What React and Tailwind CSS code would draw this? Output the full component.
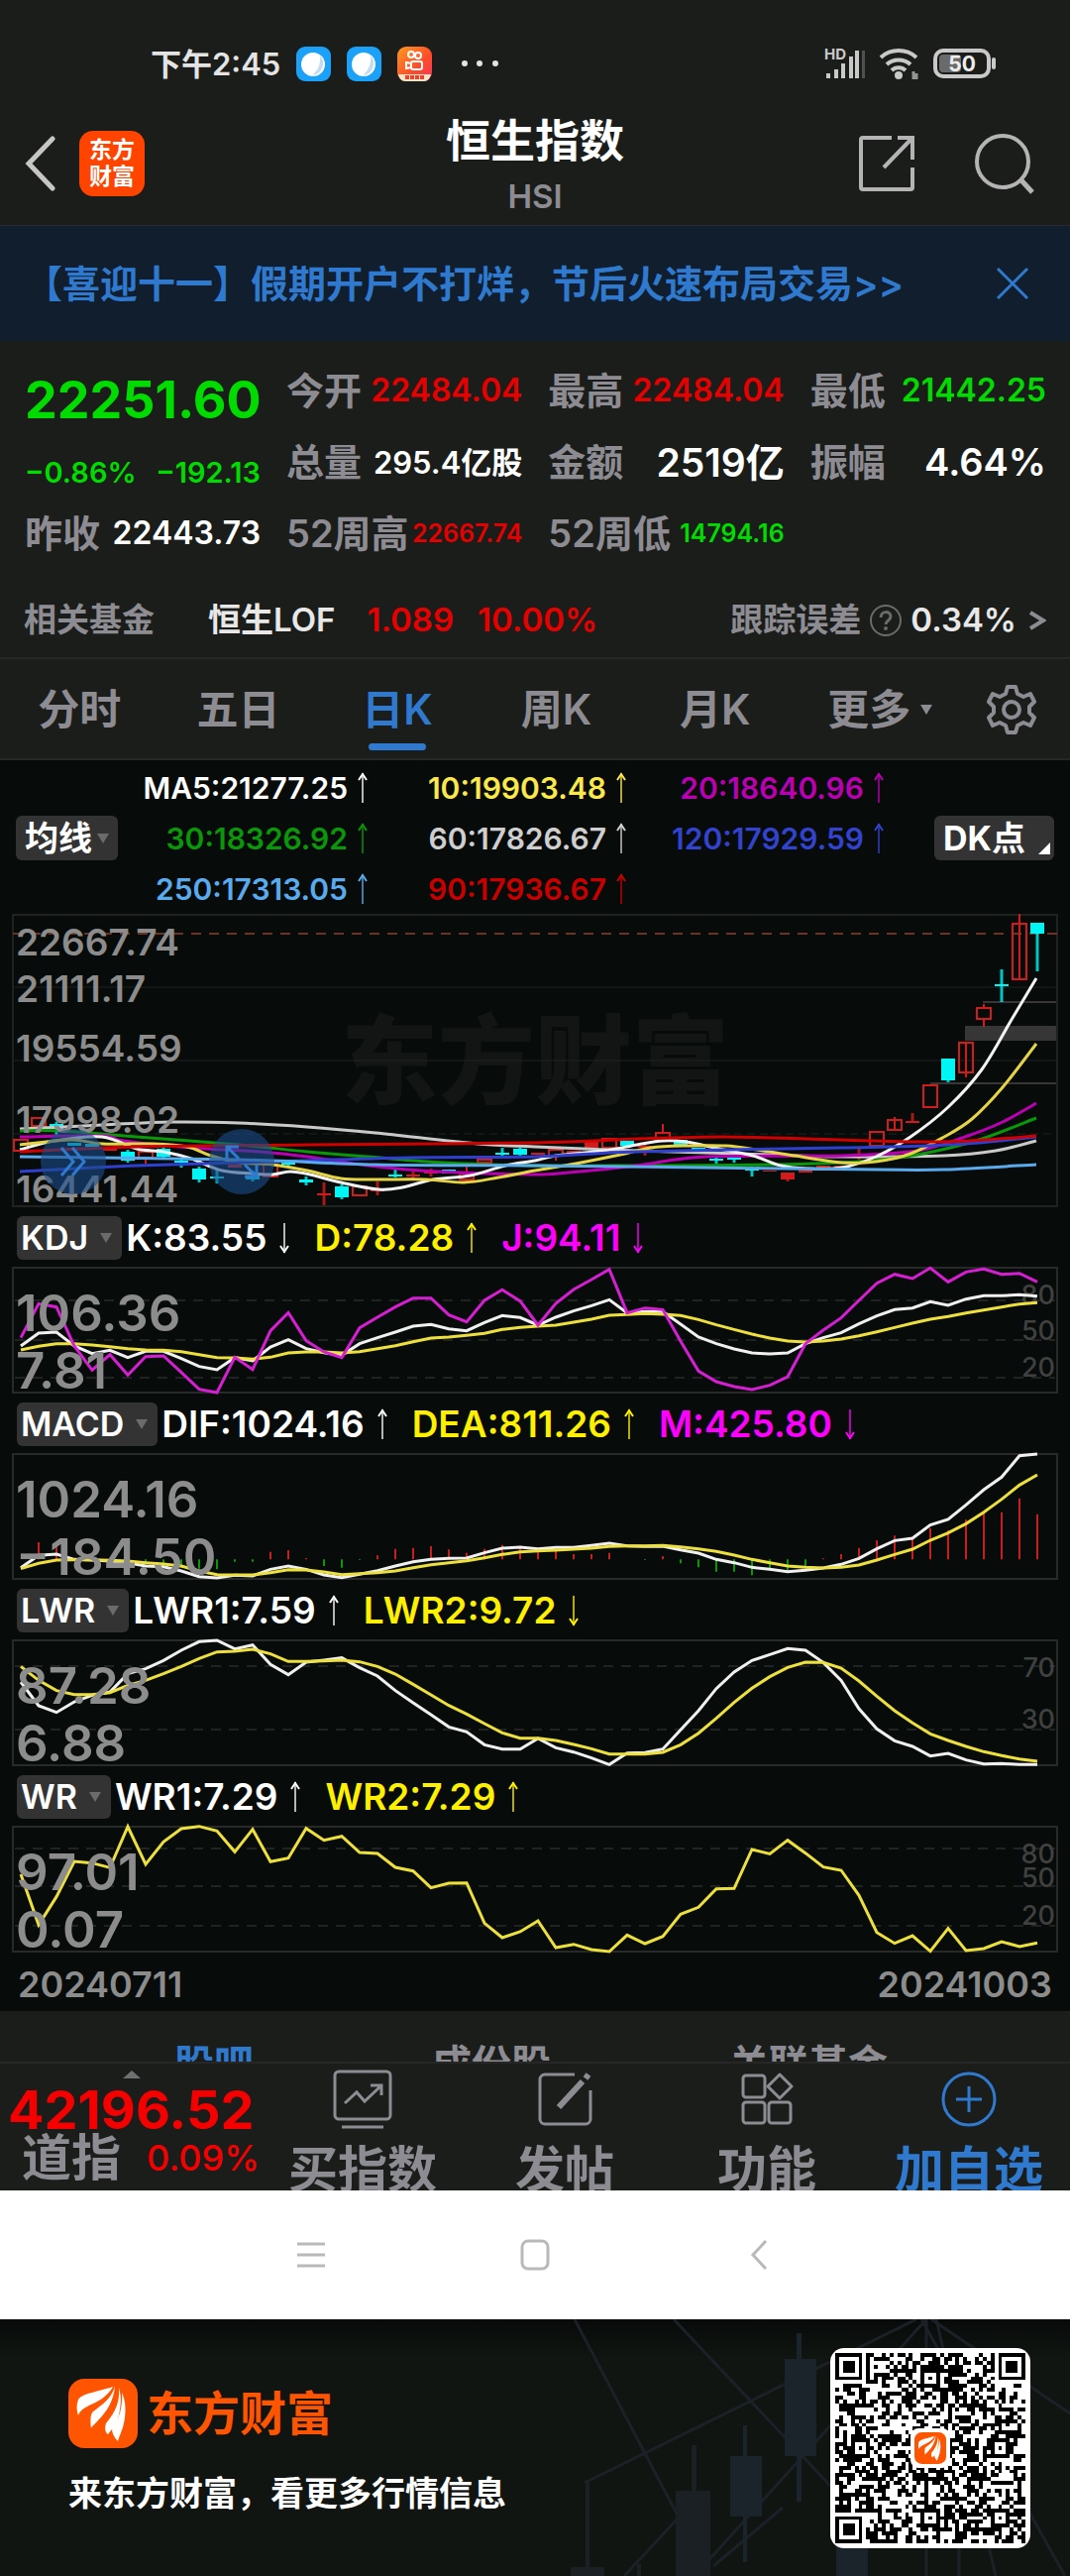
import { useState } from "react";

const STEP = 18;
const FIRST_X = 21;

const quoteRows = [
  { label: "今开", value: "22484.04", tone: "text-[#e60000] text-[32px]" },
  { label: "最高", value: "22484.04", tone: "text-[#e60000] text-[32px]" },
  { label: "最低", value: "21442.25", tone: "text-[#00dc00] text-[32px]" },
  { label: "总量", value: "295.4亿股", tone: "text-white text-[31px]" },
  { label: "金额", value: "2519亿", tone: "text-white text-[39px]" },
  { label: "振幅", value: "4.64%", tone: "text-white text-[38px]" },
  { label: "52周高", value: "22667.74", tone: "text-[#e60000] text-[25px]" },
  { label: "52周低", value: "14794.16", tone: "text-[#00dc00] text-[25px]" },
];

const periods = ["分时", "五日", "日K", "周K", "月K"];

const averages = [
  { text: "MA5:21277.25", color: "text-white" },
  { text: "10:19903.48", color: "text-[#fbe94b]" },
  { text: "20:18640.96", color: "text-[#bb00b4]" },
  { text: "30:18326.92", color: "text-[#0a970a]" },
  { text: "60:17826.67", color: "text-[#cfcfcf]" },
  { text: "120:17929.59", color: "text-[#3243cf]" },
  { text: "250:17313.05", color: "text-[#5aabee]" },
  { text: "90:17936.67", color: "text-[#c80000]" },
];

// [index, kind, body top, body bottom, wick top, wick bottom]
// kind: r = hollow red, f = filled red, c = cyan
const candles = [
  [0, "r", 228, 239], [1, "r", 206, 214], [2, "c", 212, 217, 210, 223],
  [3, "c", 231, 234], [4, "c", 232, 235], [5, "f", 236, 239],
  [6, "c", 240, 249, 238, 251], [7, "r", 240, 246, 239, 252], [8, "c", 237, 245, 235, 247],
  [9, "c", 249, 251, 246, 256], [10, "c", 257, 268, 255, 271], [11, "c", 265, 267, 258, 272],
  [12, "f", 253, 256], [13, "c", 264, 268, 259, 270], [14, "r", 253, 265],
  [15, "c", 251, 253, 249, 255], [16, "c", 268, 271, 265, 274], [17, "f", 282, 284, 271, 294],
  [18, "c", 275, 286, 273, 288], [19, "r", 275, 284], [20, "f", 278, 280, 270, 284],
  [21, "c", 263, 265, 257, 266], [22, "f", 263, 265, 260, 267], [23, "f", 260, 262, 257, 265],
  [24, "c", 258, 262], [25, "r", 262, 268, 255, 271], [26, "r", 248, 251],
  [27, "c", 241, 243, 236, 244], [28, "c", 237, 243, 236, 245], [29, "f", 241, 243],
  [30, "r", 238, 244, 238, 249], [31, "f", 239, 241], [32, "f", 230, 236],
  [33, "r", 227, 236], [34, "c", 229, 234], [35, "f", 234, 236, 232, 244],
  [36, "r", 221, 228, 212, 228], [37, "c", 228, 234], [38, "c", 236, 240],
  [39, "c", 247, 249, 244, 252], [40, "c", 246, 248, 245, 251], [41, "c", 257, 259, 255, 265],
  [42, "f", 259, 260], [43, "f", 261, 268, 261, 270], [44, "f", 259, 261],
  [45, "f", 254, 256], [46, "f", 254, 256, 254, 259], [47, "f", 242, 246, 236, 248],
  [48, "r", 220, 234], [49, "r", 208, 218, 205, 208], [50, "f", 209, 211, 201, 211],
  [51, "r", 173, 195], [52, "c", 146, 168, 146, 170], [53, "r", 130, 160, 160, 165],
  [54, "r", 95, 106, 91, 114], [55, "c", 71, 73, 56, 89], [56, "r", 10, 66, 0, 10],
  [57, "c", 9, 20, 9, 58],
];

const maLines = [
  { color: "#c9c9c9", pts: [[20, 217], [103, 213], [172, 210], [241, 211], [310, 215], [379, 221], [482, 232], [540, 235], [643, 239], [747, 242], [850, 245], [953, 244], [1005, 239], [1046, 229]] },
  { color: "#0a970a", pts: [[20, 219], [62, 219], [138, 225], [241, 233], [310, 240], [372, 245], [448, 251], [540, 254], [643, 254], [781, 253], [867, 250], [926, 243], [988, 228], [1046, 206]] },
  { color: "#bb00b4", pts: [[20, 225], [103, 224], [125, 229], [193, 236], [262, 240], [310, 245], [372, 254], [441, 260], [537, 263], [574, 261], [643, 254], [712, 245], [850, 244], [926, 239], [974, 225], [1012, 210], [1046, 191]] },
  { color: "#f3f3f3", pts: [[20, 238], [55, 229], [103, 225], [138, 237], [165, 240], [193, 247], [224, 259], [255, 262], [275, 263], [293, 260], [313, 263], [344, 271], [382, 278], [406, 276], [437, 268], [475, 264], [510, 254], [540, 249], [561, 244], [609, 239], [643, 233], [669, 229], [692, 230], [726, 237], [760, 244], [788, 254], [815, 257], [850, 256], [884, 245], [919, 225], [957, 195], [991, 157], [1022, 105], [1046, 65]] },
  { color: "#e5d444", pts: [[20, 233], [72, 228], [103, 232], [155, 232], [189, 235], [213, 244], [241, 251], [275, 253], [310, 259], [344, 267], [379, 268], [430, 268], [468, 271], [503, 266], [540, 259], [581, 252], [626, 243], [657, 236], [692, 234], [733, 234], [764, 238], [802, 244], [850, 251], [884, 250], [919, 242], [953, 225], [981, 207], [1012, 175], [1046, 131]] },
  { color: "#2f3fd0", pts: [[20, 260], [138, 254], [275, 250], [413, 246], [540, 245], [643, 240], [850, 236], [936, 234], [988, 231], [1046, 225]] },
  { color: "#5aabee", pts: [[20, 245], [241, 248], [379, 253], [540, 254], [712, 256], [884, 258], [953, 258], [1046, 253]] },
  { color: "#d00000", pts: [[20, 240], [138, 235], [310, 233], [540, 231], [643, 227], [729, 225], [815, 227], [953, 230], [1046, 224]] },
];

// Series are stored at three units per chart pixel, measured down from `base`.
const indicators = [
  {
    name: "KDJ",
    base: 175,
    legend: [
      { text: "K:83.55", dir: "down", color: "text-white" },
      { text: "D:78.28", dir: "up", color: "text-[#fff000]" },
      { text: "J:94.11", dir: "down", color: "text-[#ff00ff]" },
    ],
    max: "106.36",
    min: "7.81",
    grid: [33, 73, 111],
    marks: [["80", 37], ["50", 73], ["20", 110]],
    series: [
      { color: "#f0f0f0", values: [412, 373, 370, 412, 435, 425, 447, 428, 428, 450, 474, 484, 447, 457, 415, 393, 420, 432, 440, 405, 387, 370, 352, 347, 360, 366, 341, 320, 326, 349, 325, 306, 290, 272, 312, 308, 308, 346, 385, 405, 421, 433, 436, 433, 405, 387, 372, 345, 321, 302, 297, 278, 289, 270, 260, 260, 257, 261] },
      { color: "#eee03c", values: [424, 413, 405, 405, 409, 414, 420, 424, 425, 429, 438, 447, 448, 452, 446, 433, 430, 430, 433, 429, 420, 411, 399, 388, 385, 380, 374, 362, 356, 352, 349, 340, 331, 319, 317, 314, 316, 320, 332, 348, 362, 376, 388, 397, 400, 397, 391, 381, 369, 356, 343, 331, 323, 312, 303, 294, 285, 281] },
      { color: "#d61ed2", values: [387, 284, 294, 412, 485, 438, 500, 444, 442, 492, 543, 553, 446, 483, 366, 311, 396, 430, 447, 357, 325, 294, 267, 267, 318, 339, 274, 242, 276, 349, 283, 241, 211, 180, 312, 297, 302, 398, 488, 520, 535, 544, 531, 505, 405, 364, 327, 274, 222, 195, 208, 176, 218, 188, 179, 195, 192, 218] },
    ],
  },
  {
    name: "MACD",
    base: 171,
    legend: [
      { text: "DIF:1024.16", dir: "up", color: "text-white" },
      { text: "DEA:811.26", dir: "up", color: "text-[#fff000]" },
      { text: "M:425.80", dir: "down", color: "text-[#ff00ff]" },
    ],
    max: "1024.16",
    min: "−184.50",
    grid: [],
    marks: [],
    zero: 490,
    bars: [490, 438, 450, 490, 490, 490, 490, 505, 510, 515, 518, 520, 497, 497, 467, 462, 486, 510, 515, 492, 478, 458, 455, 450, 460, 470, 458, 446, 455, 463, 465, 474, 474, 470, 490, 492, 480, 502, 514, 527, 527, 538, 525, 528, 512, 487, 474, 455, 432, 418, 426, 395, 402, 370, 350, 347, 305, 353],
    series: [
      { color: "#f0f0f0", values: [515, 478, 474, 490, 492, 495, 500, 510, 512, 525, 542, 546, 538, 540, 520, 510, 520, 537, 545, 535, 524, 510, 497, 490, 487, 486, 470, 456, 453, 458, 454, 454, 448, 441, 449, 451, 450, 461, 471, 490, 500, 514, 520, 527, 523, 516, 505, 487, 458, 433, 426, 386, 369, 325, 279, 241, 176, 171] },
      { color: "#eee03c", values: [518, 502, 492, 491, 491, 493, 495, 500, 504, 510, 525, 536, 537, 537, 530, 521, 522, 528, 536, 533, 530, 525, 515, 506, 500, 494, 485, 475, 467, 464, 462, 459, 456, 451, 449, 449, 448, 452, 458, 466, 477, 490, 500, 510, 514, 516, 514, 507, 492, 475, 459, 432, 410, 382, 347, 308, 265, 234] },
    ],
  },
  {
    name: "LWR",
    base: 164,
    legend: [
      { text: "LWR1:7.59", dir: "up", color: "text-white" },
      { text: "LWR2:9.72", dir: "down", color: "text-[#fff000]" },
    ],
    max: "87.28",
    min: "6.88",
    grid: [26, 90],
    marks: [["70", 37], ["30", 89]],
    series: [
      { color: "#f0f0f0", values: [290, 362, 382, 350, 330, 320, 265, 250, 225, 194, 168, 164, 190, 178, 237, 268, 230, 224, 217, 247, 272, 316, 353, 389, 426, 441, 480, 493, 493, 461, 489, 502, 520, 540, 505, 504, 493, 435, 377, 310, 260, 225, 207, 189, 194, 231, 285, 371, 432, 468, 485, 514, 506, 526, 538, 537, 540, 540] },
      { color: "#eee03c", values: [243, 285, 316, 328, 328, 322, 300, 285, 265, 243, 219, 199, 197, 191, 205, 228, 228, 226, 224, 229, 243, 266, 297, 329, 361, 387, 416, 444, 460, 460, 467, 479, 492, 508, 508, 508, 503, 480, 445, 400, 352, 309, 274, 246, 230, 231, 248, 287, 333, 377, 414, 447, 467, 485, 501, 513, 523, 530] },
    ],
  },
  {
    name: "WR",
    base: 158,
    legend: [
      { text: "WR1:7.29", dir: "up", color: "text-white" },
      { text: "WR2:7.29", dir: "up", color: "text-[#fff000]" },
    ],
    max: "97.01",
    min: "0.07",
    grid: [22, 60, 100],
    marks: [["80", 37], ["50", 61], ["20", 99]],
    series: [
      { color: "#eee03c", values: [302, 455, 370, 263, 268, 282, 158, 272, 204, 164, 157, 171, 234, 166, 264, 253, 163, 199, 187, 236, 239, 281, 292, 343, 329, 328, 450, 494, 476, 443, 524, 514, 530, 536, 486, 512, 490, 423, 402, 346, 345, 227, 240, 199, 238, 280, 290, 366, 478, 511, 488, 535, 466, 533, 527, 506, 521, 510] },
    ],
  },
];

// Catmull-Rom spline through every point
const smooth = (pts) =>
  pts.reduce((d, p, i) => {
    if (i === 0) return `M${p[0]} ${p[1]}`;
    const a = pts[i - 2] || pts[i - 1];
    const b = pts[i - 1];
    const c = pts[i + 1] || p;
    return `${d}C${b[0] + (p[0] - a[0]) / 6} ${b[1] + (p[1] - a[1]) / 6} ${
      p[0] - (c[0] - b[0]) / 6
    } ${p[1] - (c[1] - b[1]) / 6} ${p[0]} ${p[1]}`;
  }, "");

const Arrow = ({ dir = "up" }) => (
  <svg
    viewBox="0 0 12 32"
    className={dir === "up" ? "h-8 w-3 shrink-0" : "h-8 w-3 shrink-0 rotate-180"}
    fill="none"
    stroke="currentColor"
  >
    <path d="M6 1v30" strokeWidth="2" opacity="0.7" />
    <path d="M2 8l4-6 4 6" strokeWidth="2" />
  </svg>
);

const Caret = ({ className }) => (
  <svg viewBox="0 0 12 10" className={className} fill="currentColor">
    <path d="M0 0h12L6 10z" />
  </svg>
);

const AppBubble = () => (
  <svg viewBox="0 0 35 35" className="size-[35px]">
    <rect width="35" height="35" rx="9" fill="#1ba1f7" />
    <ellipse cx="17" cy="18" rx="12" ry="12" fill="#fff" />
    <path d="M24 9a12 12 0 0 1-8 20c5-4 9-10 8-20z" fill="#c4dcf2" />
  </svg>
);

const StatusBar = () => (
  <div className="flex h-[102px] items-center justify-between pt-[26px] pr-[74px] pl-[152px]">
    <div className="flex items-center gap-4">
      <span className="text-[31px] font-semibold text-[#e4e4e4]">下午2:45</span>
      <AppBubble />
      <AppBubble />
      <svg viewBox="0 0 35 35" className="size-[35px]">
        <defs>
          <linearGradient id="clip" x1="0" y1="0" x2="1" y2="1">
            <stop offset="0" stopColor="#ff9a1f" />
            <stop offset="0.6" stopColor="#ff4a2a" />
            <stop offset="1" stopColor="#f5365c" />
          </linearGradient>
        </defs>
        <rect width="35" height="35" rx="9" fill="url(#clip)" />
        <g fill="none" stroke="#fff" strokeWidth="2">
          <circle cx="14" cy="8" r="3" />
          <circle cx="21" cy="9" r="3" />
          <rect x="14" y="15" width="11" height="8" rx="2" />
          <path d="M14 17l-5-1v6l5-1" />
        </g>
        <path d="M1 28h33c-1 4-3 7-7 7H8c-4 0-6-3-7-7z" fill="#fbe3c8" />
        <path d="M8 31h19" stroke="#e8452c" strokeWidth="4" strokeDasharray="4 1" />
      </svg>
      <svg viewBox="0 0 48 8" className="ml-3 h-2 w-12" fill="#e4e4e4">
        <circle cx="5" cy="4" r="3" />
        <circle cx="20" cy="4" r="3" />
        <circle cx="36" cy="4" r="3" />
      </svg>
    </div>
    <div className="flex items-center gap-3 text-[#c9c9c9]">
      <svg viewBox="0 0 42 34" className="h-[34px] w-[42px] overflow-visible" fill="currentColor">
        <text x="0" y="13" fontSize="15" fontWeight="700">HD</text>
        <path d="M2 27h4v5H2zM10 23h4v9h-4zM17 17h4v15h-4zM25 10h4v22h-4z" />
        <path d="M31 4h4v28h-4z" />
        <path d="M38 4h3v28h-3z" opacity="0.3" />
      </svg>
      <svg viewBox="0 0 44 36" className="h-9 w-11" fill="none" stroke="currentColor" strokeWidth="4">
        <path d="M3 12a27 27 0 0 1 36 0M9 19a18 18 0 0 1 24 0M14 25a10 10 0 0 1 14 0" />
        <circle cx="21" cy="30" r="2" fill="currentColor" />
        <path d="M36 26v8M39 28v6" strokeWidth="3" opacity="0.7" />
      </svg>
      <svg viewBox="0 0 64 30" className="h-[30px] w-16">
        <rect x="2" y="2" width="54" height="26" rx="8" fill="none" stroke="currentColor" strokeWidth="4" />
        <rect x="6" y="6" width="22" height="18" rx="4" fill="#6a6a6a" />
        <path d="M61 11v8" stroke="currentColor" strokeWidth="4" strokeLinecap="round" />
        <text x="29" y="23" fontSize="21" fontWeight="700" fill="#eee" textAnchor="middle">50</text>
      </svg>
    </div>
  </div>
);

const Header = () => (
  <header className="grid h-[126px] grid-cols-[1fr_auto_1fr] items-center border-b border-[#262a2e] px-6">
    <div className="flex items-center gap-6">
      <button aria-label="返回" className="text-[#c6c6c6]">
        <svg viewBox="0 0 32 56" className="h-14 w-8" fill="none" stroke="currentColor" strokeWidth="5">
          <path d="M29 3L5 28l24 25" strokeLinecap="round" />
        </svg>
      </button>
      <a
        href="#home"
        className="flex size-[66px] flex-col items-center justify-center rounded-[14px] bg-[#ff4400] text-[23px] leading-[27px] font-bold text-white"
      >
        <span>东方</span>
        <span>财富</span>
      </a>
    </div>
    <div className="flex flex-col items-center pt-[6px]">
      <h1 className="text-[45px] leading-[60px] font-bold text-white">恒生指数</h1>
      <span className="text-[33px] leading-[50px] font-semibold text-[#8d8c92]">HSI</span>
    </div>
    <div className="flex items-center justify-end gap-[58px] pr-[10px] text-[#b4b4b4]">
      <button aria-label="分享">
        <svg viewBox="0 0 58 58" className="size-[58px]" fill="none" stroke="currentColor" strokeWidth="4">
          <path d="M34 3H5a2 2 0 0 0-2 2v48a2 2 0 0 0 2 2h48a2 2 0 0 0 2-2V33" />
          <path d="M40 3h15v22M55 3L26 33" />
        </svg>
      </button>
      <button aria-label="搜索">
        <svg viewBox="0 0 64 64" className="size-16" fill="none" stroke="currentColor" strokeWidth="4">
          <circle cx="30" cy="30" r="26" />
          <path d="M48 48l12 13" strokeWidth="5" />
        </svg>
      </button>
    </div>
  </header>
);

const Quote = () => (
  <section className="grid grid-cols-[238px_1fr] gap-x-[26px] pt-[14px] pr-6 pb-3 pl-[25px] font-semibold">
    <div className="flex flex-col">
      <strong className="flex h-[92px] items-center text-[52px] font-bold text-[#00dc00]">22251.60</strong>
      <div className="flex h-[52px] items-center justify-between text-[29px] text-[#00dc00]">
        <span>−0.86%</span>
        <span>−192.13</span>
      </div>
      <div className="flex h-[72px] items-center justify-between">
        <span className="text-[38px] text-[#8d8c92]">昨收</span>
        <span className="text-[32px] text-white">22443.73</span>
      </div>
    </div>
    <dl className="grid grid-cols-3 gap-x-[26px]">
      {quoteRows.map((row) => (
        <div key={row.label} className="flex h-[72px] items-center justify-between whitespace-nowrap">
          <dt className="text-[38px] text-[#8d8c92]">{row.label}</dt>
          <dd className={row.tone}>{row.value}</dd>
        </div>
      ))}
    </dl>
  </section>
);

const RelatedFund = () => (
  <a
    href="#fund"
    className="flex h-[79px] items-center border-b-2 border-[#262726] px-6 pt-[2px] text-[33px] font-semibold whitespace-nowrap text-[#e8e8e8]"
  >
    <span className="text-[#8d8c92]">相关基金</span>
    <span className="ml-[54px]">恒生LOF</span>
    <span className="ml-8 text-[#e60000]">1.089</span>
    <span className="ml-6 text-[#e60000]">10.00%</span>
    <span className="ml-auto text-[#8d8c92]">跟踪误差</span>
    <svg viewBox="0 0 34 34" className="mx-2 size-[34px]" fill="none" stroke="#6b6b6b" strokeWidth="2">
      <circle cx="17" cy="17" r="15" />
      <path d="M12 14c0-7 10-7 10-1 0 4-5 4-5 8" strokeWidth="3" />
      <circle cx="17" cy="25" r="1" fill="#6b6b6b" />
    </svg>
    <span>0.34%</span>
    <svg viewBox="0 0 18 22" className="ml-3 h-[22px] w-[18px]" fill="none" stroke="#8d8c92" strokeWidth="4">
      <path d="M2 3l13 8-13 8" />
    </svg>
  </a>
);

const PeriodTabs = ({ active, onChange }) => (
  <nav className="grid h-[102px] grid-cols-[repeat(6,161fr)_118fr] items-stretch border-b-2 border-[#262726] pt-[2px] text-[42px] font-semibold text-[#8d8c92]">
    {periods.map((p) => (
      <button
        key={p}
        onClick={() => onChange(p)}
        className={p === active ? "relative text-[#2f7ace]" : "relative"}
      >
        {p}
        {p === active && (
          <span className="absolute bottom-2 left-1/2 h-[7px] w-[58px] -translate-x-1/2 rounded-full bg-[#2f7ace]" />
        )}
      </button>
    ))}
    <button className="flex items-center justify-center gap-[10px] pl-3">
      更多
      <Caret className="h-[10px] w-3" />
    </button>
    <button aria-label="设置" className="flex items-center justify-center">
      <svg viewBox="0 0 50 52" className="h-[52px] w-[50px]" fill="none" stroke="currentColor" strokeWidth="4" strokeLinejoin="round">
        <path d="M21 3h8l2 7 6 3 7-3 4 8-5 5v6l5 5-4 8-7-3-6 3-2 7h-8l-2-7-6-3-7 3-4-8 5-5v-6l-5-5 4-8 7 3 6-3z" />
        <circle cx="25" cy="26" r="8" />
      </svg>
    </button>
  </nav>
);

const Averages = () => (
  <div className="grid grid-cols-[119px_1fr_121px] items-center pt-[2px] pr-4 pl-4">
    <button className="flex h-[45px] w-[103px] items-center justify-between rounded-md bg-[#333333] px-[9px] text-[34px] font-bold text-white">
      均线
      <Caret className="h-3 w-3 text-[#6b6b6b]" />
    </button>
    <div className="grid grid-cols-[237px_261px_260px] text-[30px] font-semibold">
      {averages.map((m) => (
        <span key={m.text} className={`${m.color} flex h-[51px] items-center justify-end gap-[9px] whitespace-nowrap`}>
          {m.text}
          <Arrow />
        </span>
      ))}
    </div>
    <button className="flex h-[45px] items-center justify-between rounded-md bg-[#333333] pr-1 pl-[9px] text-[34px] font-bold text-white">
      DK点
      <svg viewBox="0 0 12 12" className="mt-5 size-3" fill="#fff">
        <path d="M12 0v12H0z" />
      </svg>
    </button>
  </div>
);

const CandleChart = () => (
  <div className="relative">
    <svg viewBox="0 0 1080 296" className="block w-full">
      <text x="540" y="184" textAnchor="middle" fontSize="98" fontWeight="900" fill="#121513">
        东方财富
      </text>
      <g fill="none" stroke="#1f2221" strokeWidth="2">
        <rect x="13" y="1" width="1054" height="294" />
        <path d="M13 74h1054M13 148h1054" strokeWidth="1" />
        <path d="M13 222h1054" strokeWidth="1" strokeDasharray="8 5" />
      </g>
      <path d="M13 20h1054" stroke="#6b3320" strokeWidth="2" strokeDasharray="10 8" />
      <g fill="#363636">
        <rect x="974" y="113" width="92" height="15" />
        <rect x="992" y="88" width="74" height="2" />
        <rect x="939" y="170" width="127" height="2" />
      </g>
      {candles.map(([i, kind, top, bottom, wickTop = top, wickBottom = bottom]) => {
        const x = FIRST_X + i * STEP;
        const color = kind === "c" ? "#00f5f5" : "#d01c1c";
        return (
          <g key={i} stroke={color} strokeWidth="2" fill={kind === "r" ? "none" : color}>
            {kind === "r" ? (
              <>
                <rect x={x - 7} y={top} width="14" height={bottom - top} />
                <path d={`M${x} ${wickTop}V${top}M${x} ${bottom}V${wickBottom}`} />
              </>
            ) : (
              <>
                <rect x={x - 7} y={top} width="14" height={bottom - top} stroke="none" />
                <path d={`M${x} ${wickTop}V${wickBottom}`} strokeWidth="3" opacity="0.8" />
              </>
            )}
          </g>
        );
      })}
      {maLines.map((line) => (
        <path key={line.color} d={smooth(line.pts)} fill="none" stroke={line.color} strokeWidth="3" />
      ))}
      <g fontSize="37" fontWeight="600" fill="#8c8c8c">
        <text x="16" y="42">22667.74</text>
        <text x="16" y="89">21111.17</text>
        <text x="16" y="149">19554.59</text>
        <text x="16" y="221">17998.02</text>
        <text x="16" y="291">16441.44</text>
      </g>
    </svg>
    <button
      aria-label="展开"
      className="absolute top-[217px] left-[41px] flex size-[66px] items-center justify-center rounded-full bg-[#1c4d8c]/60"
    >
      <svg viewBox="0 0 30 30" className="size-[30px]" fill="none" stroke="#2f7ace" strokeWidth="3">
        <path d="M3 1l12 14L3 29M14 1l12 14-12 14" />
      </svg>
    </button>
    <button
      aria-label="全屏"
      className="absolute top-[217px] left-[211px] flex size-[66px] items-center justify-center rounded-full bg-[#1c4d8c]/60"
    >
      <svg viewBox="0 0 36 36" className="size-9" fill="none" stroke="#2f7ace" strokeWidth="3">
        <path d="M3 15V3h12M3 3l12 12M33 21v12H21M33 33L21 21" />
      </svg>
    </button>
  </div>
);

const Indicator = ({ data }) => {
  const toY = (v) => (v - data.base) / 3;

  return (
    <section>
      <div className="flex h-[61px] items-center pl-[17px] text-[37px] font-semibold">
        <button className="mr-1 flex h-11 items-center gap-3 rounded-md bg-[#333333] pr-[10px] pl-1 text-[34px] text-white">
          {data.name}
          <Caret className="h-3 w-3 text-[#6b6b6b]" />
        </button>
        {data.legend.map((item) => (
          <span key={item.text} className={`${item.color} mr-6 flex items-center gap-3 whitespace-nowrap`}>
            {item.text}
            <Arrow dir={item.dir} />
          </span>
        ))}
      </div>
      <svg viewBox="0 0 1080 127" className="block w-full overflow-visible">
        <g fill="none" stroke="#272a29" strokeWidth="2">
          <rect x="13" y="0" width="1054" height="126" />
          {data.grid.map((y) => (
            <path key={y} d={`M15 ${y}H1065`} strokeDasharray="10 8" stroke="#202322" />
          ))}
        </g>
        <g fontSize="27" fontWeight="500" fill="#3f4140" textAnchor="end">
          {data.marks.map(([text, y]) => (
            <text key={text} x="1065" y={y}>
              {text}
            </text>
          ))}
        </g>
        {data.bars?.map((v, i) => (
          <path
            key={i}
            d={`M${FIRST_X + i * STEP} ${toY(v)}V${toY(data.zero)}`}
            stroke={v < data.zero ? "#c81e1e" : "#0a970a"}
            strokeWidth="2"
          />
        ))}
        {data.series.map((s) => (
          <polyline
            key={s.color}
            points={s.values.map((v, i) => `${FIRST_X + i * STEP},${toY(v)}`).join(" ")}
            fill="none"
            stroke={s.color}
            strokeWidth="3"
          />
        ))}
        <g fontSize="51" fontWeight="600" fill="#8c8c8c">
          <text x="16" y="64">{data.max}</text>
          <text x="16" y="122">{data.min}</text>
        </g>
      </svg>
    </section>
  );
};

const BottomBar = () => (
  <nav className="grid h-[130px] grid-cols-[264fr_204fr_204fr_204fr_204fr] overflow-hidden border-t-2 border-[#262726] text-[50px] leading-[60px] font-semibold whitespace-nowrap text-[#8d8c92]">
    <a href="#dow" className="flex flex-col pl-2 leading-none">
      <svg viewBox="0 0 18 8" className="mt-[7px] ml-[116px] h-2 w-[18px]" fill="#6f6f72">
        <path d="M9 0l9 8H0z" />
      </svg>
      <strong className="mt-1 text-[54px] leading-[55px] font-bold text-[#f50000]">42196.52</strong>
      <span className="-mt-1 flex items-center justify-between pr-[2px] pl-[14px]">
        <span>道指</span>
        <span className="text-[36px] font-medium text-[#f50000]">0.09%</span>
      </span>
    </a>
    <button className="flex flex-col items-center pt-[5px]">
      <svg viewBox="0 0 60 62" className="mb-[10px] h-[62px] w-[60px] shrink-0" fill="none" stroke="currentColor" strokeWidth="3">
        <rect x="2" y="3" width="56" height="48" rx="4" />
        <path d="M9 59h42" />
        <path d="M12 35l12-11 8 9 16-15M38 17h11v10" />
      </svg>
      买指数
    </button>
    <button className="flex flex-col items-center pt-[5px]">
      <svg viewBox="0 0 60 62" className="mb-[10px] h-[62px] w-[60px] shrink-0" fill="none" stroke="currentColor" strokeWidth="3">
        <path d="M40 6H10a5 5 0 0 0-5 5v40a5 5 0 0 0 5 5h41a5 5 0 0 0 5-5V22" />
        <path d="M24 39l24-26M51 10l3-4" strokeWidth="6" />
      </svg>
      发帖
    </button>
    <button className="flex flex-col items-center pt-[5px]">
      <svg viewBox="0 0 60 62" className="mb-[10px] h-[62px] w-[60px] shrink-0" fill="none" stroke="currentColor" strokeWidth="3">
        <rect x="6" y="7" width="22" height="22" rx="3" />
        <rect x="6" y="34" width="22" height="21" rx="3" />
        <rect x="32" y="34" width="22" height="21" rx="3" />
        <path d="M43 6l12 12-12 12-12-12z" strokeLinejoin="round" />
      </svg>
      功能
    </button>
    <button className="flex flex-col items-center pt-[5px] text-[#2f7ace]">
      <svg viewBox="0 0 60 62" className="mb-[10px] h-[62px] w-[60px] shrink-0" fill="none" stroke="currentColor" strokeWidth="3">
        <circle cx="30" cy="31" r="26" />
        <path d="M30 18v26M17 31h26" />
      </svg>
      加自选
    </button>
  </nav>
);

const SystemNav = () => (
  <div className="flex h-[130px] items-center justify-center bg-white text-[#b9b9b9]">
    <button aria-label="菜单" className="flex w-[226px] justify-center">
      <svg viewBox="0 0 28 30" className="h-[30px] w-7" stroke="currentColor" strokeWidth="3">
        <path d="M0 4h28M0 15h28M0 26h28" />
      </svg>
    </button>
    <button aria-label="主页" className="flex w-[226px] justify-center">
      <svg viewBox="0 0 30 32" className="h-8 w-[30px]" fill="none" stroke="currentColor" strokeWidth="3">
        <rect x="2" y="2" width="26" height="28" rx="6" />
      </svg>
    </button>
    <button aria-label="后退" className="flex w-[226px] justify-center">
      <svg viewBox="0 0 18 30" className="h-[30px] w-[18px]" fill="none" stroke="currentColor" strokeWidth="3">
        <path d="M16 1L3 15l13 14" />
      </svg>
    </button>
  </div>
);

const Feather = ({ className }) => (
  <svg viewBox="0 0 70 70" className={className}>
    <rect width="70" height="70" rx="16" fill="#ff5500" />
    <g fill="#fff">
      <path d="M45 8C30 13 13 15 10 21c-2 5-2 11 0 16 2-6 7-8 13-11 9-4 17-9 22-18z" />
      <path d="M47 7c-3 13-13 19-22 26-3 3-3 10-2 17 1-3 4-4 7-8 9-9 16-20 17-35z" />
      <path d="M51 9c1 14-3 24-13 36-2 6 0 10 2 11 5-7 8-7 10-15 3-12 4-22 1-32z" />
      <path d="M54 14c4 9 4 17 3 25-1 10-5 17-7 24-3-3-6-8-6-12 7-10 11-22 10-37z" />
    </g>
  </svg>
);

const QR_SIZE = 49;

const isFinder = (x, y) => {
  const corners = [[0, 0], [QR_SIZE - 7, 0], [0, QR_SIZE - 7]];
  for (const [cx, cy] of corners) {
    const dx = x - cx;
    const dy = y - cy;
    if (dx >= -1 && dx <= 7 && dy >= -1 && dy <= 7) {
      const ring = Math.max(Math.abs(dx - 3), Math.abs(dy - 3));
      return ring === 3 || ring <= 1;
    }
  }
  return null;
};

const isAlignment = (x, y) => {
  for (const [cx, cy] of [[24, 6], [6, 24], [42, 24], [24, 42], [42, 42]]) {
    const ring = Math.max(Math.abs(x - cx), Math.abs(y - cy));
    if (ring <= 2) return ring !== 1;
  }
  return null;
};

const qrPath = () => {
  let seed = 20241003;
  let d = "";
  for (let y = 0; y < QR_SIZE; y++) {
    for (let x = 0; x < QR_SIZE; x++) {
      seed = (seed * 1103515245 + 12345) % 2147483648;
      const dark = isFinder(x, y) ?? isAlignment(x, y) ?? (seed >> 16) % 100 < 51;
      if (dark) d += `M${x} ${y}h1v1h-1z`;
    }
  }
  return d;
};

const ShareFooter = () => (
  <footer className="relative flex h-[259px] items-center justify-between bg-[#101411] bg-gradient-to-b from-[#080b09] to-[#111512] to-15% pr-10 pl-[69px]">
    <svg viewBox="0 0 1080 259" preserveAspectRatio="xMaxYMid slice" className="absolute inset-0 size-full">
      <g fill="none" stroke="#1b2126" strokeWidth="3">
        <path d="M925 0L590 165M935 0L710 249M580 0L685 200M680 0L840 170M930 0L1075 259M940 0L1080 95M935 0V259M968 210V259M945 0L1005 259M790 190L720 249M685 200L630 259" />
      </g>
      <g fill="#1a242a">
        <path d="M792 40h32v98h-32zM804 14h5v170h-5zM737 138h32v61h-32zM750 107h4v138h-4zM844 220h32v39h-32z" />
      </g>
      <g fill="#1b2024">
        <path d="M682 173h35v86h-35zM698 127h5v46h-5zM576 250h34v9h-34zM591 162h4v88h-4zM643 247h4v12h-4z" />
      </g>
    </svg>
    <div className="relative flex flex-col gap-5 pt-[2px]">
      <div className="flex items-center gap-[9px]">
        <Feather className="size-[70px]" />
        <span className="text-[47px] leading-none font-bold text-[#ff5500]">东方财富</span>
      </div>
      <p className="text-[34px] leading-[52px] font-bold text-white">来东方财富，看更多行情信息</p>
    </div>
    <div className="relative flex size-[202px] items-center justify-center rounded-[14px] bg-white">
      <svg viewBox="0 0 49 49" className="size-48" shapeRendering="crispEdges">
        <path d={qrPath()} />
      </svg>
      <div className="absolute rounded-lg bg-white p-1">
        <Feather className="size-8" />
      </div>
    </div>
  </footer>
);

const App = () => {
  const [period, setPeriod] = useState("日K");
  const [showBanner, setShowBanner] = useState(true);

  return (
    <div className="bg-[#1b1d1a] font-['Inter','Noto_Sans_CJK_SC',sans-serif] leading-none">
      <StatusBar />
      <Header />

      {showBanner && (
        <div className="flex h-[116px] items-center justify-between bg-[#101e2e] pr-[41px] pl-[25px] text-[38px] font-semibold text-[#2f7ace]">
          <a href="#promo" className="whitespace-nowrap">
            【喜迎十一】假期开户不打烊，节后火速布局交易&gt;&gt;
          </a>
          <button aria-label="关闭" onClick={() => setShowBanner(false)}>
            <svg viewBox="0 0 34 34" className="size-[34px]" fill="none" stroke="currentColor" strokeWidth="3">
              <path d="M2 2l30 30M32 2L2 32" />
            </svg>
          </button>
        </div>
      )}

      <Quote />
      <RelatedFund />
      <PeriodTabs active={period} onChange={setPeriod} />

      <main className="bg-[#070b09]">
        <Averages />
        <CandleChart />
        {indicators.map((data) => (
          <Indicator key={data.name} data={data} />
        ))}
        <div className="flex h-[59px] items-center justify-between pt-1 pr-[18px] pl-[18px] text-[36px] font-semibold text-[#8c8c8c]">
          <span>20240711</span>
          <span>20241003</span>
        </div>
      </main>

      <div className="flex h-[51px] gap-[180px] overflow-hidden pt-8 pl-[176px] text-[40px] leading-[44px] font-semibold whitespace-nowrap text-[#8d8c92]">
        <a href="#bar" className="text-[#2f7ace]">股吧</a>
        <a href="#parts">成份股</a>
        <a href="#funds">关联基金</a>
      </div>
      <BottomBar />
      <SystemNav />
      <ShareFooter />
    </div>
  );
};

export default App;
